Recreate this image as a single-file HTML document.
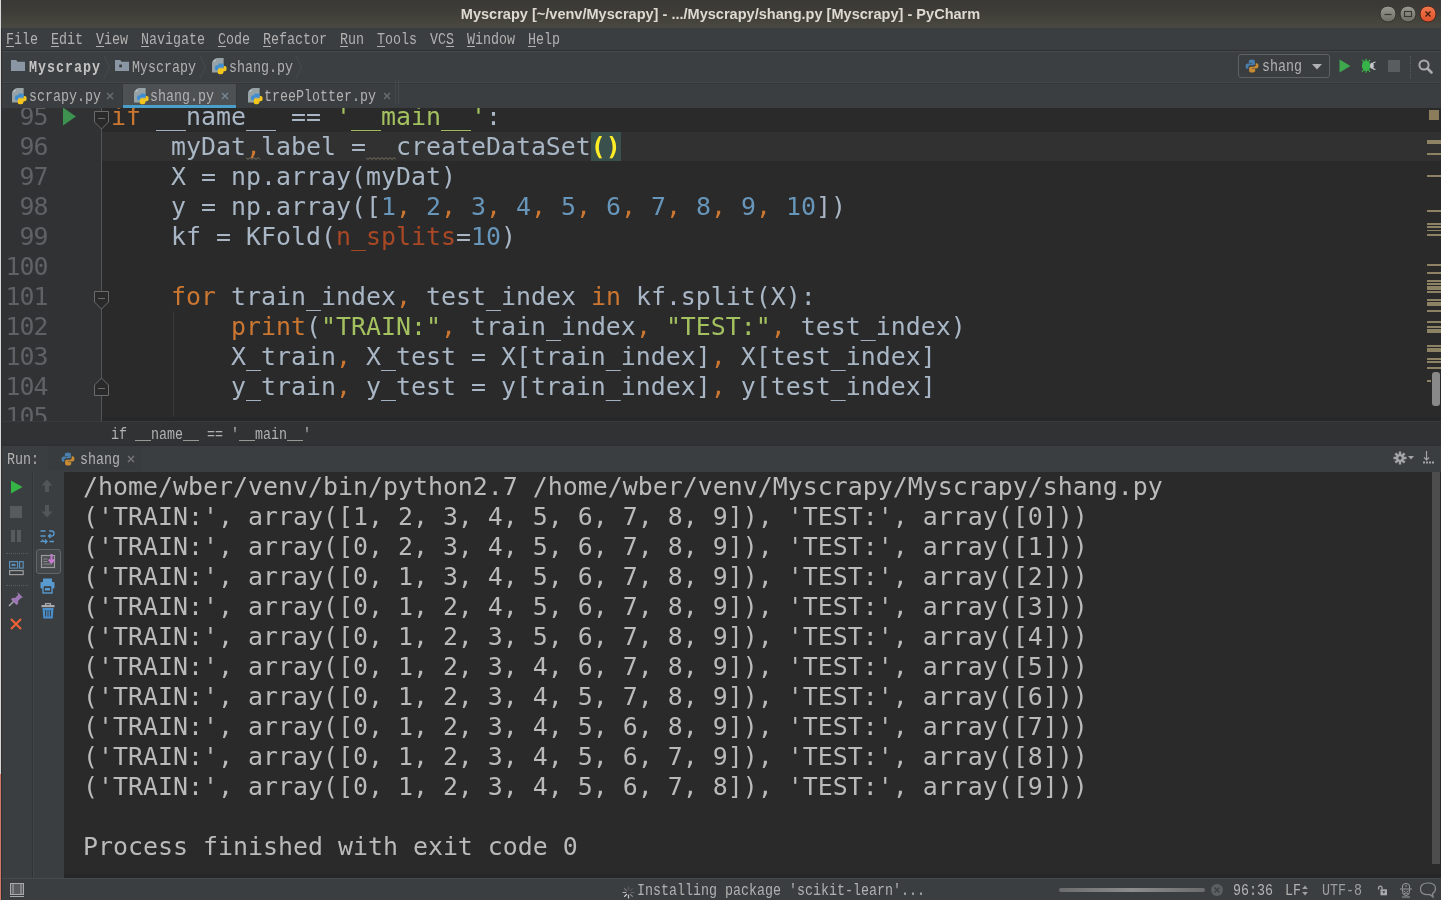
<!DOCTYPE html>
<html lang="en"><head><meta charset="utf-8"><title>Myscrapy - PyCharm</title>
<style>
*{box-sizing:border-box}
html,body{margin:0;padding:0}
body{width:1441px;height:900px;position:relative;overflow:hidden;background:#3c3f41;font-family:"Liberation Mono",monospace;color:#bbbbbb}
.abs{position:absolute}
.ui{position:absolute;font-family:"Liberation Mono",monospace;font-size:16px;line-height:20px;white-space:pre;transform:scaleX(.83333);transform-origin:0 0;color:#b2b2b2}
.ui u{text-decoration:underline;text-underline-offset:2px;text-decoration-thickness:1px}
.code{position:absolute;font-family:"DejaVu Sans Mono","Liberation Mono",monospace;font-size:24.915px;line-height:30px;height:30px;white-space:pre;color:#a9b7c6}
.ln{position:absolute;left:2px;width:45.500px;text-align:right;letter-spacing:-1px;font-family:"DejaVu Sans Mono","Liberation Mono",monospace;font-size:24.915px;line-height:30px;height:30px;color:#606366;white-space:pre}
.k{color:#cc7832}.s{color:#a5c261}.n{color:#6897bb}.p{color:#aa4926}
.mb{background:#3b514d;color:#ffef28;font-weight:bold}

.con{color:#bbbbbb}
</style></head>
<body>
<div id="win" style="position:absolute;left:0;top:0;width:1441px;height:900px;will-change:transform;opacity:.999">
<div class="abs" id="titlebar" style="left:0;top:0;width:1441px;height:28px;background:linear-gradient(#3b3a36,#3d3c38 30%,#4a4941 100%)"></div>
<div class="abs" id="title" style="left:0;top:0;width:1441px;height:28px;line-height:28px;text-align:center;font-family:'Liberation Sans',sans-serif;font-weight:bold;font-size:14.55px;color:#dfdbd2;white-space:pre">Myscrapy [~/venv/Myscrapy] - .../Myscrapy/shang.py [Myscrapy] - PyCharm</div>
<svg class="abs" style="left:1376px;top:2px" width="64" height="24" viewBox="0 0 64 24">
<defs><linearGradient id="gb" x1="0" y1="0" x2="0" y2="1"><stop offset="0" stop-color="#9a9a92"/><stop offset="1" stop-color="#6f6e67"/></linearGradient>
<linearGradient id="gr" x1="0" y1="0" x2="0" y2="1"><stop offset="0" stop-color="#f37a50"/><stop offset="1" stop-color="#e0512a"/></linearGradient></defs>
<circle cx="12" cy="12" r="8" fill="url(#gb)" stroke="#35342f" stroke-width="1"/>
<path d="M8.500 12.500h7" stroke="#3a3935" stroke-width="1.200"/>
<circle cx="32" cy="12" r="8" fill="url(#gb)" stroke="#35342f" stroke-width="1"/>
<rect x="28.500" y="9.500" width="7" height="5" fill="none" stroke="#3a3935" stroke-width="1.100"/>
<circle cx="52" cy="12" r="8" fill="url(#gr)" stroke="#4a2a20" stroke-width="1"/>
<path d="M49.500 9.500l5 5M54.500 9.500l-5 5" stroke="#3d1d12" stroke-width="1.300"/>
</svg>
<div class="abs" style="left:0;top:28px;width:1441px;height:22px;background:#3c3f41"></div>
<div class="ui" style="left:6px;top:30px"><u>F</u>ile</div>
<div class="ui" style="left:51px;top:30px"><u>E</u>dit</div>
<div class="ui" style="left:96px;top:30px"><u>V</u>iew</div>
<div class="ui" style="left:141px;top:30px"><u>N</u>avigate</div>
<div class="ui" style="left:218px;top:30px"><u>C</u>ode</div>
<div class="ui" style="left:263px;top:30px"><u>R</u>efactor</div>
<div class="ui" style="left:340px;top:30px"><u>R</u>un</div>
<div class="ui" style="left:377px;top:30px"><u>T</u>ools</div>
<div class="ui" style="left:430px;top:30px">VC<u>S</u></div>
<div class="ui" style="left:467px;top:30px"><u>W</u>indow</div>
<div class="ui" style="left:528px;top:30px"><u>H</u>elp</div>
<div class="abs" style="left:0;top:50px;width:1441px;height:1px;background:#2f3133"></div>
<div class="abs" style="left:0;top:51px;width:1441px;height:1px;background:#4a4d4f"></div>
<svg class="abs" style="left:11px;top:60px" width="14" height="11" viewBox="0 0 15 12" preserveAspectRatio="none"><path d="M0 0h5.5l1.5 2h8v10h-15z" fill="#8b97a4"/></svg>
<div class="ui" style="left:29px;top:58px;font-weight:bold;letter-spacing:1.2px;color:#c4c4c4">Myscrapy</div>
<svg class="abs" style="left:103px;top:55px" width="8" height="24" viewBox="0 0 8 24"><path d="M1 1l5.5 11L1 23" fill="none" stroke="#484b4d" stroke-width="1"/></svg>
<svg class="abs" style="left:115px;top:60px" width="14" height="11" viewBox="0 0 15 12" preserveAspectRatio="none"><path d="M0 0h5.5l1.5 2h8v10h-15z" fill="#8b97a4"/><rect x="4.5" y="5" width="3" height="3" fill="#3c3f41"/></svg>
<div class="ui" style="left:132px;top:58px">Myscrapy</div>
<svg class="abs" style="left:199px;top:55px" width="8" height="24" viewBox="0 0 8 24"><path d="M1 1l5.5 11L1 23" fill="none" stroke="#484b4d" stroke-width="1"/></svg>
<svg class="abs" style="left:211px;top:58px" width="16" height="17" viewBox="0 0 16 17">
<path d="M5.600 0h7v14.500H1V4.600z" fill="#98a3a8"/><path d="M4.600 0.200L1.100 3.700h3.500z" fill="#b9c1c5"/>
<path d="M7.500 5.500h3.300q2 0 2 2v2h-4.300q-1.300 0-1.300 1.300v1.700h-1.200q-2 0-2-2.200v-1q0-2 2-2h1.500z" fill="#3f8fd0"/>
<path d="M12.800 8h1q1.800 0 1.800 2v1.200q0 2-2 2h-1.300v1q0 2-2 2h-1.600q-2 0-2-2v-2.200q0-1.500 1.500-1.500h3.300q1.300 0 1.300-1.300z" fill="#f5c71c"/>
</svg>
<div class="ui" style="left:229px;top:58px">shang.py</div>
<svg class="abs" style="left:295px;top:55px" width="8" height="24" viewBox="0 0 8 24"><path d="M1 1l5.5 11L1 23" fill="none" stroke="#484b4d" stroke-width="1"/></svg>
<div class="abs" style="left:1238px;top:54px;width:92px;height:24px;border:1px solid #5f6264;border-radius:3px;background:#3c3f41"></div>
<svg class="abs" style="left:1245px;top:59px" width="14" height="14" viewBox="0 0 14 14">
<path d="M6.8 0.5q-3 0-3 1.8v1.7h3.2v.6H2.3q-1.8 0-1.8 2.6q0 2.5 1.7 2.5h1.1v-1.6q0-1.8 1.9-1.8h3.2q1.5 0 1.5-1.6V2.3q0-1.8-3.1-1.8z" fill="#4a7fae"/>
<path d="M7.2 13.5q3 0 3-1.8V10H7v-.6h4.7q1.8 0 1.8-2.6q0-2.5-1.7-2.5h-1.1v1.6q0 1.8-1.9 1.8H5.6q-1.5 0-1.5 1.6v2.4q0 1.8 3.1 1.8z" fill="#c98c35"/>
</svg>
<div class="ui" style="left:1262px;top:57px">shang</div>
<svg class="abs" style="left:1312px;top:64px" width="10" height="6" viewBox="0 0 10 6"><path d="M0 0h10L5 5.500z" fill="#b0b2b3"/></svg>
<svg class="abs" style="left:1338px;top:58px" width="14" height="16" viewBox="0 0 14 16"><path d="M1.5 1.5v13L12.5 8z" fill="#3fa94f"/></svg>
<svg class="abs" style="left:1360px;top:58px" width="16" height="16" viewBox="0 0 16 16">
<path d="M3.700 3.800L2.200 1.800M6.100 3V0.800M8.500 3.800L10 1.800M3.700 11.700L2.200 13.800M6.100 12.500V14.800M8.500 11.700L10 13.800" stroke="#3cae4d" stroke-width="1.300" fill="none"/>
<ellipse cx="6.100" cy="7.750" rx="4.200" ry="5.200" fill="#38b44a"/>
<ellipse cx="11.900" cy="7.750" rx="1.900" ry="2.900" fill="#c4c7c9"/>
<path d="M12.500 5.500q1.500-1.600 3-1.300M12.500 10q1.500 1.600 3 1.300" stroke="#c4c7c9" stroke-width="1.100" fill="none"/>
</svg>
<div class="abs" style="left:1388px;top:60px;width:12px;height:12px;background:#5b5e60"></div>
<div class="abs" style="left:1410px;top:56px;width:0;height:22px;border-left:1px dotted #5a5d5f"></div>
<svg class="abs" style="left:1416px;top:57px" width="18" height="18" viewBox="0 0 18 18"><circle cx="8" cy="8" r="4.600" fill="none" stroke="#a9abac" stroke-width="2"/><path d="M11.500 11.500l4 4" stroke="#a9abac" stroke-width="2.600" stroke-linecap="round"/></svg>
<div class="abs" style="left:0;top:82px;width:1441px;height:1px;background:#45484a"></div>
<div class="abs" style="left:0;top:83px;width:1441px;height:1px;background:#36383a"></div>
<div class="abs" style="left:0;top:84px;width:1441px;height:24px;background:#3c3f41"></div>
<div class="abs" style="left:123px;top:84px;width:113px;height:24px;background:#4e5254"></div>
<div class="abs" style="left:123px;top:105px;width:113px;height:3px;background:#4a9fcb"></div>
<div class="abs" style="left:122px;top:84px;width:1px;height:24px;background:#37393b"></div>
<div class="abs" style="left:236px;top:84px;width:1px;height:24px;background:#37393b"></div>
<div class="abs" style="left:395px;top:80px;width:1px;height:24px;background:#45484a"></div><div class="abs" style="left:398px;top:80px;width:1px;height:24px;background:#484b4d"></div>
<svg class="abs" style="left:11px;top:88px" width="16" height="17" viewBox="0 0 16 17">
<path d="M5.600 0h7v14.500H1V4.600z" fill="#98a3a8"/><path d="M4.600 0.200L1.100 3.700h3.500z" fill="#b9c1c5"/>
<path d="M7.500 5.500h3.300q2 0 2 2v2h-4.300q-1.300 0-1.300 1.300v1.700h-1.200q-2 0-2-2.200v-1q0-2 2-2h1.500z" fill="#3f8fd0"/>
<path d="M12.800 8h1q1.800 0 1.800 2v1.200q0 2-2 2h-1.300v1q0 2-2 2h-1.600q-2 0-2-2v-2.200q0-1.500 1.500-1.500h3.300q1.300 0 1.300-1.300z" fill="#f5c71c"/>
</svg>
<div class="ui" style="left:29px;top:87px">scrapy.py</div>
<svg class="abs" style="left:106px;top:92px" width="8" height="8" viewBox="0 0 8 8"><path d="M1 1l6 6M7 1l-6 6" stroke="#6e7173" stroke-width="1.3"/></svg>
<svg class="abs" style="left:133px;top:88px" width="16" height="17" viewBox="0 0 16 17">
<path d="M5.600 0h7v14.500H1V4.600z" fill="#98a3a8"/><path d="M4.600 0.200L1.100 3.700h3.500z" fill="#b9c1c5"/>
<path d="M7.500 5.500h3.300q2 0 2 2v2h-4.300q-1.300 0-1.300 1.300v1.700h-1.200q-2 0-2-2.200v-1q0-2 2-2h1.500z" fill="#3f8fd0"/>
<path d="M12.800 8h1q1.800 0 1.800 2v1.200q0 2-2 2h-1.300v1q0 2-2 2h-1.600q-2 0-2-2v-2.200q0-1.500 1.500-1.500h3.300q1.300 0 1.300-1.300z" fill="#f5c71c"/>
</svg>
<div class="ui" style="left:150px;top:87px">shang.py</div>
<svg class="abs" style="left:221px;top:92px" width="8" height="8" viewBox="0 0 8 8"><path d="M1 1l6 6M7 1l-6 6" stroke="#7a8a96" stroke-width="1.3"/></svg>
<svg class="abs" style="left:247px;top:88px" width="16" height="17" viewBox="0 0 16 17">
<path d="M5.600 0h7v14.500H1V4.600z" fill="#98a3a8"/><path d="M4.600 0.200L1.100 3.700h3.500z" fill="#b9c1c5"/>
<path d="M7.500 5.500h3.300q2 0 2 2v2h-4.300q-1.300 0-1.300 1.300v1.700h-1.200q-2 0-2-2.200v-1q0-2 2-2h1.500z" fill="#3f8fd0"/>
<path d="M12.800 8h1q1.800 0 1.800 2v1.200q0 2-2 2h-1.300v1q0 2-2 2h-1.600q-2 0-2-2v-2.200q0-1.500 1.500-1.500h3.300q1.300 0 1.300-1.300z" fill="#f5c71c"/>
</svg>
<div class="ui" style="left:264px;top:87px">treePlotter.py</div>
<svg class="abs" style="left:383px;top:92px" width="8" height="8" viewBox="0 0 8 8"><path d="M1 1l6 6M7 1l-6 6" stroke="#6e7173" stroke-width="1.3"/></svg>
<div class="abs" id="editor" style="left:0;top:108px;width:1441px;height:313px;background:#2b2b2b;overflow:hidden">
<div class="abs" style="left:0;top:0;width:102px;height:313px;background:#313335"></div>
<div class="abs" style="left:101px;top:0;width:1px;height:313px;background:#555555"></div>
<div class="abs" style="left:102px;top:24px;width:1339px;height:29px;background:#323232"></div>
<div class="abs" style="left:173px;top:203px;width:1px;height:120px;background:#393939"></div>
<div class="ln" style="top:-6px">95</div>
<div class="code" style="left:111px;top:-6px"><span class="k">if</span> __name__ == <span class="s">'__main__'</span>:</div>
<div class="ln" style="top:24px">96</div>
<div class="code" style="left:111px;top:24px">    myDat<span class="k">,</span>label =  createDataSet<span class="mb">()</span></div>
<div class="ln" style="top:54px">97</div>
<div class="code" style="left:111px;top:54px">    X = np.array(myDat)</div>
<div class="ln" style="top:84px">98</div>
<div class="code" style="left:111px;top:84px">    y = np.array([<span class="n">1</span><span class="k">, </span><span class="n">2</span><span class="k">, </span><span class="n">3</span><span class="k">, </span><span class="n">4</span><span class="k">, </span><span class="n">5</span><span class="k">, </span><span class="n">6</span><span class="k">, </span><span class="n">7</span><span class="k">, </span><span class="n">8</span><span class="k">, </span><span class="n">9</span><span class="k">, </span><span class="n">10</span>])</div>
<div class="ln" style="top:114px">99</div>
<div class="code" style="left:111px;top:114px">    kf = KFold(<span class="p">n_splits</span>=<span class="n">10</span>)</div>
<div class="ln" style="top:144px">100</div>
<div class="ln" style="top:174px">101</div>
<div class="code" style="left:111px;top:174px">    <span class="k">for</span> train_index<span class="k">,</span> test_index <span class="k">in</span> kf.split(X):</div>
<div class="ln" style="top:204px">102</div>
<div class="code" style="left:111px;top:204px">        <span class="k">print</span>(<span class="s">"TRAIN:"</span><span class="k">,</span> train_index<span class="k">,</span> <span class="s">"TEST:"</span><span class="k">,</span> test_index)</div>
<div class="ln" style="top:234px">103</div>
<div class="code" style="left:111px;top:234px">        X_train<span class="k">,</span> X_test = X[train_index]<span class="k">,</span> X[test_index]</div>
<div class="ln" style="top:264px">104</div>
<div class="code" style="left:111px;top:264px">        y_train<span class="k">,</span> y_test = y[train_index]<span class="k">,</span> y[test_index]</div>
<div class="ln" style="top:294px">105</div>
<svg class="abs" style="left:246px;top:49px" width="15" height="3" viewBox="0 0 15 3"><path d="M0 0.5 L2 2.5 L4 0.5 L6 2.5 L8 0.5 L10 2.5 L12 0.5 L14 2.5" fill="none" stroke="#8a8067" stroke-width="0.900"/></svg>
<svg class="abs" style="left:366px;top:49px" width="30" height="3" viewBox="0 0 30 3"><path d="M0 0.5 L2 2.5 L4 0.5 L6 2.5 L8 0.5 L10 2.5 L12 0.5 L14 2.5 L16 0.5 L18 2.5 L20 0.5 L22 2.5 L24 0.5 L26 2.5 L28 0.5 L30 2.5" fill="none" stroke="#8a8067" stroke-width="0.900"/></svg>
<div class="abs" style="left:102px;top:309px;width:1339px;height:4px;background:#272929"></div>
<svg class="abs" style="left:62px;top:-1px" width="15" height="19" viewBox="0 0 15 19"><path d="M1 0.5v18L14 9.5z" fill="#3f9350"/></svg>
<svg class="abs" style="left:94px;top:3px" width="15" height="19" viewBox="0 0 15 19"><path d="M0.5 0.5h14v10.5l-7 7l-7-7z" fill="#2b2b2b" stroke="#6a6c6e"/><path d="M4 7.5h7" stroke="#6a6c6e"/></svg>
<svg class="abs" style="left:94px;top:183px" width="15" height="19" viewBox="0 0 15 19"><path d="M0.5 0.5h14v10.5l-7 7l-7-7z" fill="#2b2b2b" stroke="#6a6c6e"/><path d="M4 7.5h7" stroke="#6a6c6e"/></svg>
<svg class="abs" style="left:94px;top:269px" width="15" height="19" viewBox="0 0 15 19"><path d="M0.5 18.5h14v-10.5l-7-7l-7 7z" fill="#2b2b2b" stroke="#6a6c6e"/><path d="M4 11.5h7" stroke="#6a6c6e"/></svg>
<div class="abs" style="left:1429px;top:2px;width:10px;height:10px;background:#8c7d5c"></div>
<div class="abs" style="left:1427px;top:32px;width:14px;height:4px;background:#8e8365"></div>
<div class="abs" style="left:1427px;top:45px;width:14px;height:2px;background:#8e8365"></div>
<div class="abs" style="left:1427px;top:67px;width:14px;height:2px;background:#8e8365"></div>
<div class="abs" style="left:1427px;top:102px;width:14px;height:2px;background:#8e8365"></div>
<div class="abs" style="left:1427px;top:114.5px;width:14px;height:2px;background:#8e8365"></div>
<div class="abs" style="left:1427px;top:118px;width:14px;height:2px;background:#8e8365"></div>
<div class="abs" style="left:1427px;top:121.5px;width:14px;height:1.6px;background:#8e8365"></div>
<div class="abs" style="left:1427px;top:126px;width:14px;height:2px;background:#8e8365"></div>
<div class="abs" style="left:1427px;top:156px;width:14px;height:2px;background:#8e8365"></div>
<div class="abs" style="left:1427px;top:164px;width:14px;height:2px;background:#8e8365"></div>
<div class="abs" style="left:1427px;top:172px;width:14px;height:2px;background:#8e8365"></div>
<div class="abs" style="left:1427px;top:175.3px;width:14px;height:1.5px;background:#8e8365"></div>
<div class="abs" style="left:1427px;top:178px;width:14px;height:4px;background:#8e8365"></div>
<div class="abs" style="left:1427px;top:183px;width:14px;height:1.6px;background:#8e8365"></div>
<div class="abs" style="left:1427px;top:191.3px;width:14px;height:2px;background:#8e8365"></div>
<div class="abs" style="left:1427px;top:194px;width:14px;height:4px;background:#8e8365"></div>
<div class="abs" style="left:1427px;top:202.3px;width:14px;height:1.6px;background:#8e8365"></div>
<div class="abs" style="left:1427px;top:213px;width:14px;height:2px;background:#8e8365"></div>
<div class="abs" style="left:1427px;top:218px;width:14px;height:2px;background:#8e8365"></div>
<div class="abs" style="left:1427px;top:221px;width:14px;height:4px;background:#8e8365"></div>
<div class="abs" style="left:1427px;top:237px;width:14px;height:2px;background:#8e8365"></div>
<div class="abs" style="left:1427px;top:239.8px;width:14px;height:4px;background:#8e8365"></div>
<div class="abs" style="left:1427px;top:250px;width:14px;height:2px;background:#8e8365"></div>
<div class="abs" style="left:1427px;top:253.3px;width:14px;height:2px;background:#8e8365"></div>
<div class="abs" style="left:1427px;top:259.2px;width:14px;height:1.6px;background:#8e8365"></div>
<div class="abs" style="left:1427px;top:272px;width:4px;height:2px;background:#8e8365"></div>
<div class="abs" style="left:1432px;top:264px;width:8px;height:34px;background:#8a8a8a;border-radius:3px"></div>
</div>
<div class="abs" style="left:0;top:421px;width:1441px;height:25px;background:#313335;border-top:1px solid #393b3d"></div>
<div class="ui" style="left:111px;top:425px">if __name__ == '__main__'</div>
<div class="abs" style="left:0;top:446px;width:1441px;height:25px;background:#3c3f41"></div>
<div class="abs" style="left:0;top:444px;width:1441px;height:2px;background:#2e3032"></div>
<div class="abs" style="left:48px;top:446px;width:94px;height:25px;background:#3a3d3f"></div>
<div class="ui" style="left:7px;top:450px">Run:</div>
<svg class="abs" style="left:61px;top:452px" width="14" height="14" viewBox="0 0 14 14">
<path d="M6.8 0.5q-3 0-3 1.8v1.7h3.2v.6H2.3q-1.8 0-1.8 2.6q0 2.5 1.7 2.5h1.1v-1.6q0-1.8 1.9-1.8h3.2q1.5 0 1.5-1.6V2.3q0-1.8-3.1-1.8z" fill="#4a7fae"/>
<path d="M7.2 13.5q3 0 3-1.8V10H7v-.6h4.7q1.8 0 1.8-2.6q0-2.5-1.7-2.5h-1.1v1.6q0 1.8-1.9 1.8H5.6q-1.5 0-1.5 1.6v2.4q0 1.8 3.1 1.8z" fill="#c98c35"/>
</svg>
<div class="ui" style="left:80px;top:450px">shang</div>
<svg class="abs" style="left:127px;top:455px" width="8" height="8" viewBox="0 0 8 8"><path d="M1 1l6 6M7 1l-6 6" stroke="#77797b" stroke-width="1.3"/></svg>
<svg class="abs" style="left:1393px;top:451px" width="14" height="14" viewBox="0 0 14 14"><g stroke="#a3a5a6" stroke-width="2.4"><path d="M7 0.5v13M0.5 7h13M2.4 2.4l9.2 9.2M11.6 2.4l-9.2 9.2"/></g><circle cx="7" cy="7" r="4" fill="#a3a5a6"/><circle cx="7" cy="7" r="1.7" fill="#3c3f41"/></svg>
<svg class="abs" style="left:1408px;top:456px" width="6" height="4" viewBox="0 0 6 4"><path d="M0 0h6L3 3.5z" fill="#a3a5a6"/></svg>
<svg class="abs" style="left:1422px;top:450px" width="13" height="15" viewBox="0 0 13 15"><path d="M4.5 1v9M2 7.5l2.5 2.5L7 7.5" fill="none" stroke="#a3a5a6" stroke-width="1.2"/><path d="M1 12.5h11" stroke="#a3a5a6" stroke-width="2.2" stroke-dasharray="2 1"/></svg>
<div class="abs" style="left:0;top:471px;width:1441px;height:407px;background:#3c3f41"></div>
<div class="abs" style="left:32px;top:471px;width:1px;height:407px;background:#323537"></div>
<div class="abs" style="left:33px;top:471px;width:1px;height:407px;background:#45484a"></div>
<div class="abs" style="left:64px;top:472px;width:1377px;height:406px;background:#2b2b2b"></div>
<div class="abs" style="left:64px;top:874px;width:1377px;height:4px;background:#272727"></div>
<div class="code con" style="left:83px;top:472px">/home/wber/venv/bin/python2.7 /home/wber/venv/Myscrapy/Myscrapy/shang.py</div>
<div class="code con" style="left:83px;top:502px">('TRAIN:', array([1, 2, 3, 4, 5, 6, 7, 8, 9]), 'TEST:', array([0]))</div>
<div class="code con" style="left:83px;top:532px">('TRAIN:', array([0, 2, 3, 4, 5, 6, 7, 8, 9]), 'TEST:', array([1]))</div>
<div class="code con" style="left:83px;top:562px">('TRAIN:', array([0, 1, 3, 4, 5, 6, 7, 8, 9]), 'TEST:', array([2]))</div>
<div class="code con" style="left:83px;top:592px">('TRAIN:', array([0, 1, 2, 4, 5, 6, 7, 8, 9]), 'TEST:', array([3]))</div>
<div class="code con" style="left:83px;top:622px">('TRAIN:', array([0, 1, 2, 3, 5, 6, 7, 8, 9]), 'TEST:', array([4]))</div>
<div class="code con" style="left:83px;top:652px">('TRAIN:', array([0, 1, 2, 3, 4, 6, 7, 8, 9]), 'TEST:', array([5]))</div>
<div class="code con" style="left:83px;top:682px">('TRAIN:', array([0, 1, 2, 3, 4, 5, 7, 8, 9]), 'TEST:', array([6]))</div>
<div class="code con" style="left:83px;top:712px">('TRAIN:', array([0, 1, 2, 3, 4, 5, 6, 8, 9]), 'TEST:', array([7]))</div>
<div class="code con" style="left:83px;top:742px">('TRAIN:', array([0, 1, 2, 3, 4, 5, 6, 7, 9]), 'TEST:', array([8]))</div>
<div class="code con" style="left:83px;top:772px">('TRAIN:', array([0, 1, 2, 3, 4, 5, 6, 7, 8]), 'TEST:', array([9]))</div>
<div class="code con" style="left:83px;top:832px">Process finished with exit code 0</div>
<div class="abs" style="left:1432px;top:472px;width:8px;height:392px;background:#4e4e4e"></div>
<svg class="abs" style="left:10px;top:479px" width="14" height="16" viewBox="0 0 14 16"><path d="M1 1.5v13L12.5 8z" fill="#35b647"/></svg>
<div class="abs" style="left:10px;top:506px;width:12px;height:12px;background:#595c5e"></div>
<div class="abs" style="left:11px;top:530px;width:4px;height:12px;background:#595c5e"></div><div class="abs" style="left:17px;top:530px;width:4px;height:12px;background:#595c5e"></div>
<div class="abs" style="left:6px;top:553px;width:22px;height:0;border-top:1px dotted #5a5d5f"></div>
<svg class="abs" style="left:9px;top:561px" width="15" height="15" viewBox="0 0 15 15"><g fill="none" stroke="#5b8fb8" stroke-width="1.2"><rect x="0.6" y="0.6" width="8" height="6.5"/><rect x="10.6" y="0.6" width="3.6" height="6.5"/></g><rect x="2.5" y="2.8" width="4" height="2.2" fill="#5b8fb8"/><rect x="0.6" y="9.6" width="13.6" height="4" fill="none" stroke="#9a9c9d" stroke-width="1.2"/></svg>
<div class="abs" style="left:6px;top:585px;width:22px;height:0;border-top:1px dotted #5a5d5f"></div>
<svg class="abs" style="left:8px;top:591px" width="16" height="16" viewBox="0 0 16 16"><path d="M9.5 1l5.5 5.5-2 .5-3 3 .3 2.5-1.8 1.5L3 8.500l1.500-1.800 2.500.300 3-3z" fill="#9f79b5"/><path d="M5.500 10.500L1 15" stroke="#a9abac" stroke-width="1.4"/></svg>
<svg class="abs" style="left:10px;top:618px" width="12" height="12" viewBox="0 0 12 12"><path d="M1 1l10 10M11 1L1 11" stroke="#e8623a" stroke-width="2.2"/></svg>
<svg class="abs" style="left:41px;top:479px" width="12" height="14" viewBox="0 0 12 14"><path d="M6 0.500L11.500 6.500H8V13H4V6.500H0.500z" fill="#54575a"/></svg>
<svg class="abs" style="left:41px;top:504px" width="12" height="14" viewBox="0 0 12 14"><path d="M6 13.500L11.500 7.500H8V1H4V7.500H0.500z" fill="#54575a"/></svg>
<svg class="abs" style="left:40px;top:529px" width="15" height="15" viewBox="0 0 15 15"><g fill="none" stroke="#5a9bd0" stroke-width="1.3"><path d="M0.500 2h5M9 2h2.500q2.500 0 2.500 2.500T11.500 7H9"/><path d="M10.500 5L8.500 7l2 2"/><path d="M0.500 7h5M0.500 12.500h2M14 12.500H9.500M6 12.500h-1.500q-2-0-2-2"/><path d="M5 10.500l2 2-2 2"/></g></svg>
<div class="abs" style="left:36px;top:549px;width:25px;height:25px;border:1px solid #646769;border-radius:3px;background:#45484b"></div>
<svg class="abs" style="left:40px;top:553px" width="16" height="16" viewBox="0 0 16 16"><rect x="1.500" y="2.500" width="13" height="12" fill="#4f5255" stroke="#9a9c9e" stroke-width="1.200"/><path d="M3.500 6h4M3.500 8.500h4M3.500 11h8" stroke="#8a8c8e" stroke-width="1"/><path d="M11.500 1v8M8.800 6.500l2.700 3.200l2.700-3.200" fill="none" stroke="#c77bd0" stroke-width="2"/></svg>
<svg class="abs" style="left:40px;top:578px" width="15" height="16" viewBox="0 0 15 16"><rect x="3" y="0.500" width="9" height="4" fill="#5a9bd0"/><rect x="0.500" y="4" width="14" height="6.500" rx="1" fill="#5a9bd0"/><rect x="3" y="7.500" width="9" height="7.500" fill="#3c3f41" stroke="#5a9bd0" stroke-width="1.400"/><rect x="5" y="10" width="5" height="2.500" fill="#5a9bd0"/></svg>
<svg class="abs" style="left:41px;top:603px" width="14" height="16" viewBox="0 0 14 16"><path d="M4.500 2V0.700h5V2" fill="none" stroke="#a9abac" stroke-width="1.200"/><rect x="0.500" y="2" width="13" height="2.200" fill="#a9abac"/><path d="M1.500 5h11l-.8 10.500h-9.400z" fill="#4a90cf"/><path d="M4.600 7v6.500M7 7v6.500M9.400 7v6.500" stroke="#3c3f41" stroke-width="1"/></svg>
<div class="abs" style="left:0;top:878px;width:1441px;height:22px;background:#3c3f41;border-top:1px solid #484b4d"></div>
<svg class="abs" style="left:10px;top:883px" width="14" height="14" viewBox="0 0 14 14"><rect x="0.500" y="0.500" width="13" height="11" fill="#5b5e60" stroke="#a9abac"/><path d="M3 0.500v11M11 0.500v11" stroke="#a9abac"/><path d="M0 13.500h14" stroke="#a9abac"/></svg>
<svg class="abs" style="left:621.500px;top:885.500px" width="13" height="13" viewBox="0 0 13 13"><g stroke-width="1.200" stroke-linecap="round"><path d="M6.500 1v2.800" stroke="#5a5d5f"/><path d="M10.400 2.600l-2 2" stroke="#55585a"/><path d="M12 6.500H9.200" stroke="#606365"/><path d="M10.400 10.400l-2-2" stroke="#85878a"/><path d="M6.500 12V9.200" stroke="#c8c8c8"/><path d="M2.600 10.400l2-2" stroke="#dcdcdc"/><path d="M1 6.500h2.800" stroke="#b4b4b4"/><path d="M2.600 2.600l2 2" stroke="#77797b"/></g></svg>
<div class="ui" style="left:637px;top:881px">Installing package 'scikit-learn'...</div>
<div class="abs" style="left:1059px;top:888px;width:146px;height:4px;border-radius:2px;background:linear-gradient(90deg,#6b6d6f,#8b8d8e 50%,#6b6d6f)"></div>
<svg class="abs" style="left:1210px;top:883px" width="14" height="14" viewBox="0 0 14 14"><circle cx="7" cy="7" r="6" fill="#5d6062"/><path d="M4.500 4.500l5 5M9.500 4.500l-5 5" stroke="#3c3f41" stroke-width="1.300"/></svg>
<div class="ui" style="left:1233px;top:881px">96:36</div>
<div class="ui" style="left:1285px;top:881px">LF</div>
<svg class="abs" style="left:1302px;top:885px" width="6" height="11" viewBox="0 0 6 11"><path d="M3 0.500L5.800 4H0.200zM3 10.500L5.800 7H0.200z" fill="#a0a2a3"/></svg>
<div class="ui" style="left:1322px;top:881px;color:#9c9e9f">UTF-8</div>
<svg class="abs" style="left:1377px;top:885px" width="11" height="11" viewBox="0 0 11 11"><path d="M1.600 4.500V3q0-1.800 1.700-1.800T5 3v1.500" fill="none" stroke="#a9abac" stroke-width="1.300"/><rect x="3.500" y="4.300" width="6.500" height="6" fill="#a9abac"/><path d="M5.200 6.300h3.200l-1.600 2.200z" fill="#3c3f41"/></svg>
<svg class="abs" style="left:1399px;top:882px" width="14" height="16" viewBox="0 0 14 16"><g fill="none" stroke="#9a9c9d" stroke-width="1"><path d="M3.500 6.500V4q0-2.500 3.500-2.500T10.500 4v2.500"/><path d="M1 7h12"/><path d="M3.500 7.500v2q0 4 3.500 4t3.500-4v-2"/><path d="M7 3v2"/><path d="M4.800 12q2.200-2.200 4.400 0"/><path d="M4.500 8.800l2 1.200M9.500 8.800l-2 1.200"/></g><path d="M3 15h8" stroke="#9a9c9d"/></svg>
<svg class="abs" style="left:1419px;top:882px" width="18" height="17" viewBox="0 0 18 17"><path d="M9 1q7.500 0 7.500 5.500q0 3.500-3 5l.5 3.500l-3-2.500q-1 .2-2 .2q-7.500 0-7.500-5.700Q1.500 1 9 1z" fill="none" stroke="#8d8f90" stroke-width="1.200"/></svg>
<div class="abs" style="left:0;top:0;width:1px;height:774px;background:#d9d9d9"></div>
<div class="abs" style="left:0;top:774px;width:1px;height:126px;background:#d8766a"></div>
<div class="abs" style="left:1px;top:28px;width:1px;height:872px;background:#2e3032"></div>
</div>
</body></html>
